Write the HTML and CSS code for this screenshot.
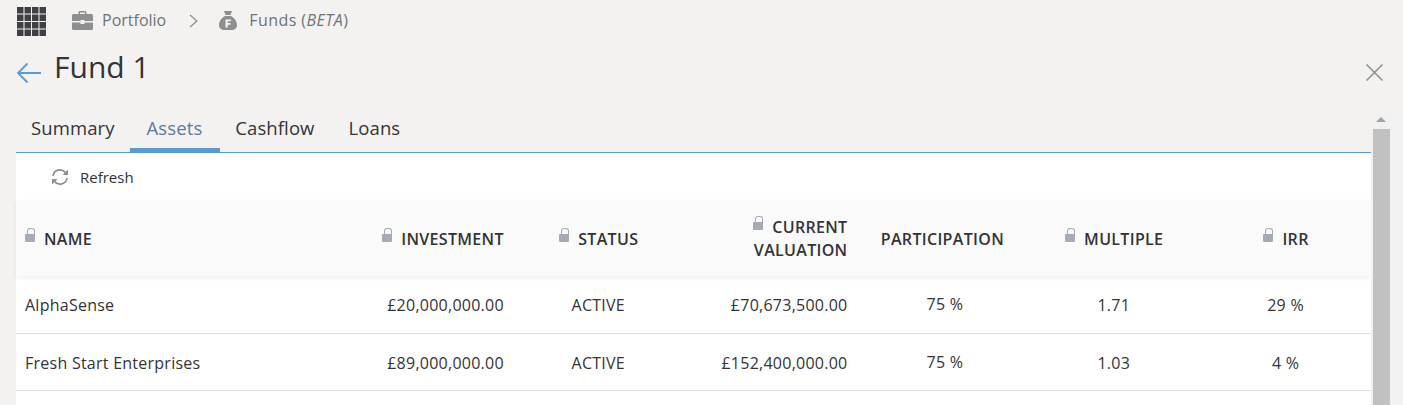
FILE: index.html
```html
<!DOCTYPE html>
<html lang="en">
<head>
  <meta charset="UTF-8">
  <title>Fund 1</title>
  <link rel="stylesheet" href="styles.css">
</head>
<body>
  <div class="page">
    <nav class="crumbs">
      <svg class="apps" width="29" height="29" viewBox="0 0 29 29"><path fill="#3f3f44" d="M0 0h6.5v6.5H0zM7.5 0h6.5v6.5H7.5zM15 0h6.5v6.5H15zM22.500 0H29v6.500h-6.500zM0 7.500h6.500V14H0zM7.500 7.500H14V14H7.500zM15 7.500h6.500V14H15zM22.500 7.500H29V14h-6.500zM0 15h6.500v6.500H0zM7.500 15H14v6.500H7.500zM15 15h6.500v6.500H15zM22.500 15H29v6.500h-6.500zM0 22.500h6.500V29H0zM7.500 22.500H14V29H7.500zM15 22.500h6.500V29H15zM22.500 22.500H29V29h-6.500z"/></svg>
      <a class="crumb crumb-portfolio">
        <svg width="21" height="20" viewBox="0 0 21 20"><path fill="#8f8f8f" d="M6.500 3V1.500C6.500.7 7.200 0 8 0h5c.8 0 1.500.7 1.500 1.500V3H19.500c.8 0 1.500.7 1.500 1.500V10H12.500V9h-4v1H0V4.500C0 3.700.7 3 1.500 3zM8 3h5V1.500H8zM0 11.500h8.500V13h4v-1.500H21V17.500c0 .8-.7 1.500-1.500 1.500h-18C.7 19 0 18.300 0 17.500z"/></svg>
        <span>Portfolio</span>
      </a>
      <svg class="chevron" width="9" height="14" viewBox="0 0 9 14"><path fill="none" stroke="#8c8c8c" stroke-width="1.200" d="M1 1l7 6-7 6"/></svg>
      <a class="crumb crumb-funds">
        <svg width="18" height="20" viewBox="0 0 18 20"><path fill="#8f8f8f" d="M5 0h8l-1.500 4h-5zM6 5h6c3.500 1.800 6 5.500 6 9 0 3.500-2.500 5-5 5H5c-2.500 0-5-1.500-5-5 0-3.500 2.500-7.200 6-9z"/><path fill="#f3f2f1" d="M6.500 8.500h5.500v1.800H8.700v1.700h2.800v1.700H8.700V16.500H6.500z"/></svg>
        <span>Funds (<em>BETA</em>)</span>
      </a>
    </nav>

    <header class="title-row">
      <svg class="back" width="25" height="22" viewBox="0 0 25 22"><path fill="none" stroke="#5b9bd5" stroke-width="1.800" d="M25 11H2M11.500 1.500L2 11l9.500 9.500"/></svg>
      <h1>Fund 1</h1>
      <svg class="close" width="17" height="17" viewBox="0 0 17 17"><path fill="none" stroke="#8a8f8c" stroke-width="1.500" d="M.5.500l16 16M16.500.5l-16 16"/></svg>
    </header>

    <div class="tabs">
      <a class="tab">Summary</a>
      <a class="tab active">Assets</a>
      <a class="tab">Cashflow</a>
      <a class="tab">Loans</a>
    </div>

    <main class="panel">
      <div class="toolbar">
        <svg width="18" height="18" viewBox="0 0 18 18"><g fill="none" stroke="#8f8f8f" stroke-width="1.700"><path d="M2 8a7 7 0 0 1 12.300-3.600L16 6"/><path d="M16 10a7 7 0 0 1-12.300 3.600L2 12"/></g><path fill="#8f8f8f" d="M17 1.500V7h-5.500zM1 16.500V11h5.500z"/></svg>
        <span>Refresh</span>
      </div>
      <table class="assets">
        <colgroup>
          <col class="col-name"><col><col><col><col><col><col>
        </colgroup>
        <thead>
          <tr>
            <th class="left"><i class="lock"></i>NAME</th>
            <th class="right"><i class="lock"></i>INVESTMENT</th>
            <th><i class="lock"></i>STATUS</th>
            <th class="right"><i class="lock"></i>CURRENT VALUATION</th>
            <th>PARTICIPATION</th>
            <th><i class="lock"></i>MULTIPLE</th>
            <th><i class="lock"></i>IRR</th>
          </tr>
        </thead>
        <tbody>
          <tr>
            <td class="left">AlphaSense</td>
            <td class="right">£20,000,000.00</td>
            <td>ACTIVE</td>
            <td class="right">£70,673,500.00</td>
            <td class="share">75 %</td>
            <td>1.71</td>
            <td>29 %</td>
          </tr>
          <tr>
            <td class="left">Fresh Start Enterprises</td>
            <td class="right">£89,000,000.00</td>
            <td>ACTIVE</td>
            <td class="right">£152,400,000.00</td>
            <td class="share">75 %</td>
            <td>1.03</td>
            <td>4 %</td>
          </tr>
        </tbody>
      </table>
    </main>

    <aside class="scrollbar">
      <div class="arrow"></div>
      <div class="thumb"></div>
    </aside>
  </div>
</body>
</html>
```
FILE: styles.css
```css
:root {
  --bg: #f3f2f1;
  --text: #333338;
  --muted: #6f7377;
  --blue: #5b9bd5;
}

* {
  box-sizing: border-box;
}

html, body {
  height: 100%;
}

body {
  margin: 0;
  overflow: hidden;
  font-family: "Open Sans", sans-serif;
  background: var(--bg);
  color: var(--text);
}

.page {
  position: relative;
  height: 405px;
  overflow: hidden;
  padding: 0 32px 0 16px;
}

.crumbs {
  display: flex;
  align-items: center;
  height: 40px;
  padding-top: 2px;
  font-size: 16px;
  color: var(--muted);
}

.crumbs svg {
  flex: none;
}

.apps {
  margin-left: 1px;
}

.crumb {
  display: flex;
  align-items: center;
  gap: 9px;
}

.crumb span {
  position: relative;
  top: -1px;
}

.crumb-portfolio {
  margin-left: 26px;
}

.chevron {
  margin-left: 23px;
}

.crumb-funds {
  margin-left: 21px;
  gap: 12px;
}

.crumb-funds span {
  letter-spacing: 0.45px;
}

.title-row {
  position: relative;
  display: flex;
  align-items: flex-start;
  height: 66px;
}

.back {
  margin-top: 22px;
}

h1 {
  margin: 7px 0 0 13px;
  font-size: 30px;
  font-weight: 400;
  line-height: 40px;
}

.close {
  position: absolute;
  top: 24px;
  right: -12px;
}

.tabs {
  display: flex;
  height: 47px;
  border-bottom: 1px solid var(--blue);
}

.tab {
  height: 46px;
  padding: 8px 15px 0;
  font-size: 18.500px;
  letter-spacing: 0.1px;
  line-height: 28px;
}

.tab:nth-child(3) {
  padding-right: 17px;
}

.tab:nth-child(4) {
  padding-left: 17px;
}

.tab.active {
  padding: 8px 18px 0 17px;
  color: #5c7a9c;
  border-bottom: 4px solid var(--blue);
}

.panel {
  background: #ffffff;
  height: 252px;
}

.toolbar {
  display: flex;
  align-items: center;
  gap: 11px;
  height: 47px;
  padding-left: 35px;
  font-size: 15px;
}

.assets {
  width: 100%;
  table-layout: fixed;
  border-collapse: collapse;
  font-size: 16px;
  letter-spacing: 0.25px;
}

.col-name {
  width: 324px;
}

thead tr {
  position: relative;
  box-shadow: 0 2px 4px rgba(0, 0, 0, 0.07);
}

th {
  height: 76px;
  padding: 2px 8px 0 10px;
  background: #fafafa;
  font-weight: 600;
  letter-spacing: 0.32px;
  line-height: 23px;
  text-align: center;
}

td {
  height: 57px;
  padding: 2px 8px 0 9px;
  text-align: center;
  border-bottom: 1px solid #dddddd;
}

th.left, td.left {
  text-align: left;
  padding-left: 9px;
}

th.right, td.right {
  text-align: right;
}

td.share {
  padding: 0 8px 0 15px;
}

.lock {
  position: relative;
  display: inline-block;
  width: 10px;
  height: 8px;
  margin-right: 9px;
  top: -3px;
  border-radius: 1px;
  background: #a5abb5;
}

.lock::before {
  content: "";
  position: absolute;
  left: 2px;
  bottom: 7px;
  width: 6px;
  height: 6px;
  border: 1.500px solid #a5abb5;
  border-bottom: none;
  border-radius: 3px 3px 0 0;
}

.scrollbar {
  position: absolute;
  top: 110px;
  left: 1371px;
  width: 26px;
  height: 295px;
  background: #f1f1f1;
}

.arrow {
  width: 0;
  margin: 0 0 0 5px;
  position: relative;
  top: 7px;
  border: 5px solid transparent;
  border-top: none;
  border-bottom-color: #a3a3a3;
}

.thumb {
  height: 276px;
  width: 17px;
  margin: 14px 0 0 2px;
  background: #c1c1c1;
}
```
